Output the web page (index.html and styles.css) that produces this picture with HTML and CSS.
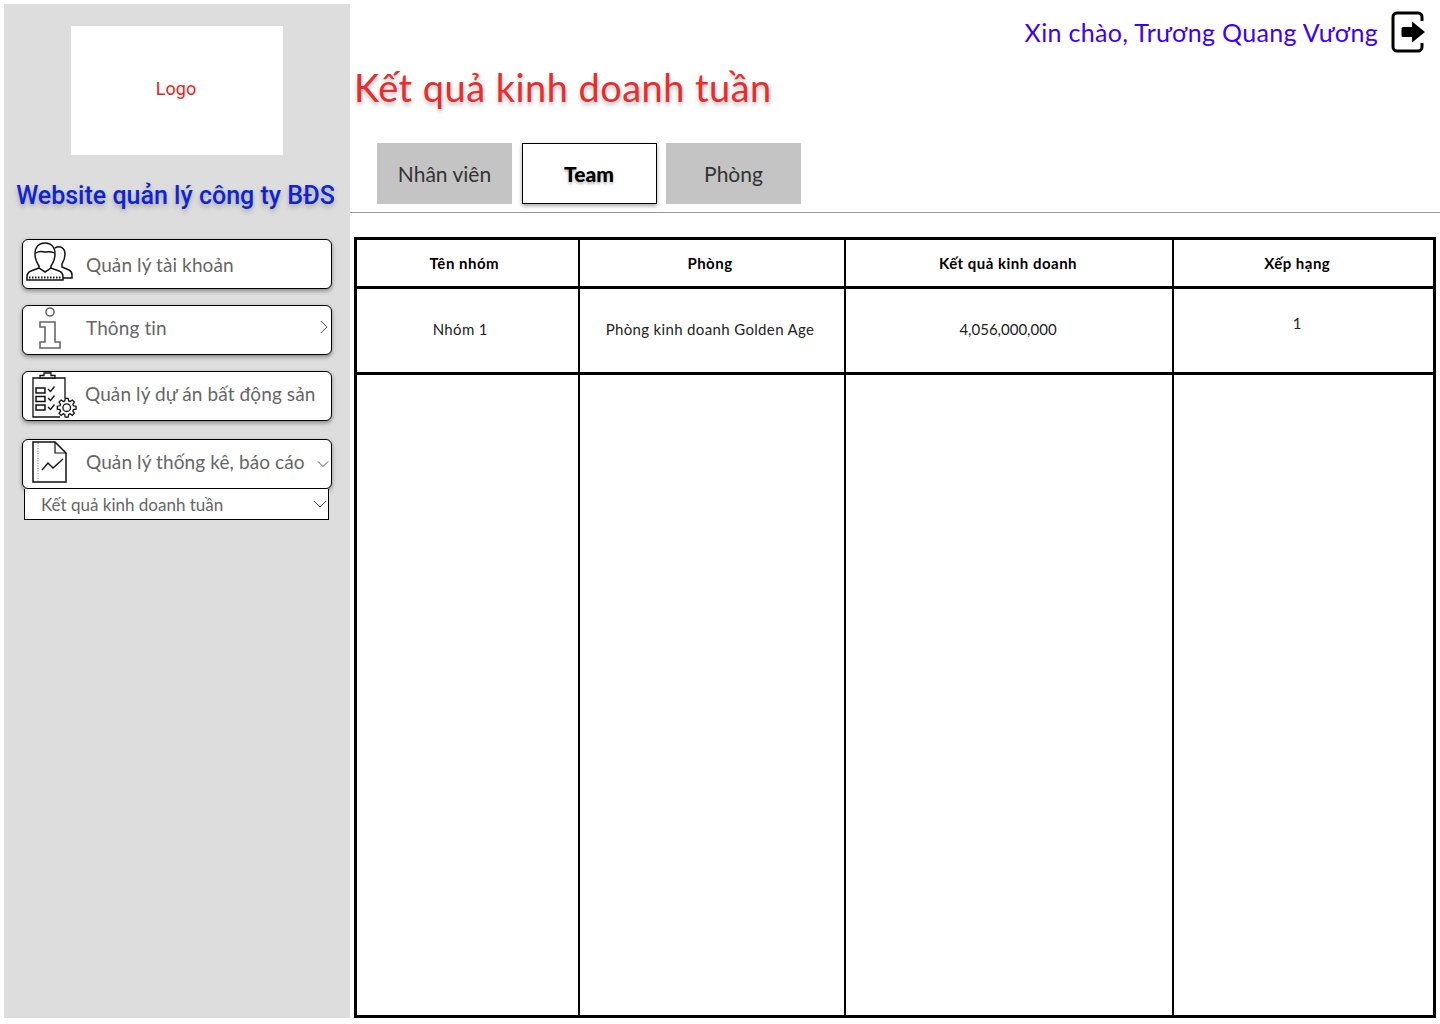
FILE: index.html
```html
<!DOCTYPE html>
<html lang="vi">

<head>
  <meta charset="UTF-8">
  <meta name="viewport" content="width=device-width, initial-scale=1.0">
  <title>Kết quả kinh doanh tuần</title>
  <link rel="stylesheet" href="styles.css">
</head>

<body>

  <aside class="sidebar">
    <div class="logo">Logo</div>
    <h2 class="brand">Website quản lý công ty BĐS</h2>

    <nav class="menu">
      <a class="menu-item">
        <svg class="menu-icon" width="50" height="48" viewBox="0 0 50 48" fill="none" stroke="#111" stroke-width="1.5">
          <path d="M30 8c5-3 10 0 10 6 0 4-1 7-3 10v3l7 3c2 1 3 3 3 5v3h-9"/>
          <path d="M10 14c0-7 4-11 10-11s10 4 10 11c0 5-2 9-4 12v3l-6 3-6-3v-3c-2-3-4-7-4-12z" fill="#fff"/>
          <path d="M11 13c4-3 7-1 9-1s6-1 9 1"/>
          <path d="M14 28l-8 3c-3 1-4 4-4 6v3h36v-3c0-2-1-5-4-6l-8-3-6 4z" fill="#fff"/>
          <path d="M4 37.5h32" stroke-dasharray="1.5 1.5" stroke-width="2"/>
        </svg>
        <span class="menu-text">Quản lý tài khoản</span>
      </a>

      <a class="menu-item">
        <svg class="menu-icon" width="50" height="48" viewBox="0 0 50 48" fill="none" stroke="#666" stroke-width="1.6">
          <circle cx="25" cy="6" r="4"/>
          <path d="M15 16h15v20h5v6H15v-6h5V21h-5z"/>
        </svg>
        <span class="menu-text menu-text-up">Thông tin</span>
        <svg class="menu-arrow menu-arrow-up" width="10" height="14" viewBox="0 0 10 14" fill="none" stroke="#555" stroke-width="1">
          <path d="M2 1l6 6-6 6"/>
        </svg>
      </a>

      <a class="menu-item">
        <svg class="menu-icon" width="50" height="48" viewBox="0 0 50 48" fill="none" stroke="#111" stroke-width="1.3">
          <path d="M35 45H8V6h32v20"/>
          <path d="M15 6V3.500h4V1h7v2.500h4V6z" fill="#fff"/>
          <path d="M11 16h9v5h-9zM11 24.500h9v5h-9zM11 33h9v5h-9z" stroke-width="1.5"/>
          <path d="M23 17l2.500 2.500 4-5M23 26l2.500 2.500 4-5M23 35l2.500 2.500 4-5"/>
          <g transform="translate(41.7 35.7)">
            <polygon fill="#fff" points="6.73,-1.93 9.38,-1.49 9.38,1.49 6.73,1.93 6.12,3.39 7.69,5.58 5.58,7.69 3.39,6.12 1.93,6.73 1.49,9.38 -1.49,9.38 -1.93,6.73 -3.39,6.12 -5.58,7.69 -7.69,5.58 -6.12,3.39 -6.73,1.93 -9.38,1.49 -9.38,-1.49 -6.73,-1.93 -6.12,-3.39 -7.69,-5.58 -5.58,-7.69 -3.39,-6.12 -1.93,-6.73 -1.49,-9.38 1.49,-9.38 1.93,-6.73 3.39,-6.12 5.58,-7.69 7.69,-5.58 6.12,-3.39"/>
            <circle r="3.8"/>
          </g>
        </svg>
        <span class="menu-text menu-text-up menu-text-tight">Quản lý dự án bất động sản</span>
      </a>

      <div class="menu-group">
        <a class="menu-item">
          <svg class="menu-icon" width="50" height="48" viewBox="0 0 50 48" fill="none" stroke="#111" stroke-width="1.5">
            <path d="M8 2h22l11 11v29H8z"/>
            <path d="M30 2v11h11" stroke-width="1.2"/>
            <path d="M13 3v38" stroke="#777" stroke-width="1" stroke-dasharray="1 1.5"/>
            <path d="M17 30l6-7 5 5 10-9" stroke-width="1.3"/>
          </svg>
          <span class="menu-text menu-text-up">Quản lý thống kê, báo cáo</span>
          <svg class="menu-arrow" width="12" height="8" viewBox="0 0 12 8" fill="none" stroke="#555" stroke-width="1">
            <path d="M1 1.5l5 5 5-5"/>
          </svg>
        </a>
        <div class="submenu">
          <span>Kết quả kinh doanh tuần</span>
          <svg width="14" height="8" viewBox="0 0 14 8" fill="none" stroke="#444" stroke-width="1">
            <path d="M1 1l6 6 6-6"/>
          </svg>
        </div>
      </div>
    </nav>
  </aside>

  <main class="content">
    <div class="topbar">
      <span class="greeting">Xin chào, Trương Quang Vương</span>
      <svg class="logout" width="36" height="44" viewBox="0 0 36 44" fill="none">
        <path d="M31 11V7a4 4 0 0 0-4-4H6a4 4 0 0 0-4 4v30a4 4 0 0 0 4 4h21a4 4 0 0 0 4-4v-4" stroke="#000" stroke-width="3"/>
        <path d="M12 17h9v-5.500L34 22 21 32.500V27h-9a1.500 1.500 0 0 1-1.500-1.500v-7A1.500 1.500 0 0 1 12 17z" fill="#000"/>
      </svg>
    </div>

    <h1 class="page-title">Kết quả kinh doanh tuần</h1>

    <div class="tabs">
      <div class="tab">Nhân viên</div>
      <div class="tab tab-active">Team</div>
      <div class="tab">Phòng</div>
    </div>

    <table class="report">
      <colgroup>
        <col class="col-team">
        <col class="col-dept">
        <col class="col-result">
        <col>
      </colgroup>
      <thead>
        <tr>
          <th class="cell-team">Tên nhóm</th>
          <th class="cell-dept">Phòng</th>
          <th class="cell-result">Kết quả kinh doanh</th>
          <th class="cell-rank">Xếp hạng</th>
        </tr>
      </thead>
      <tbody>
        <tr class="row-data">
          <td class="cell-name">Nhóm 1</td>
          <td class="cell-dept">Phòng kinh doanh Golden Age</td>
          <td class="cell-result cell-number">4,056,000,000</td>
          <td class="cell-rank rank">1</td>
        </tr>
        <tr class="row-empty">
          <td></td>
          <td></td>
          <td></td>
          <td></td>
        </tr>
      </tbody>
    </table>
  </main>

</body>

</html>
```

FILE: styles.css
```css
* {
  box-sizing: border-box;
}

body {
  font-family: Lato, "Noto Sans", sans-serif;
  margin: 0;
  padding: 4px 0 6px 4px;
  display: flex;
  height: 1024px;
  background-color: #FFFFFF;
  overflow: hidden;
}

/* Sidebar */
.sidebar {
  width: 346px;
  flex-shrink: 0;
  background-color: #DDDDDD;
  padding-top: 22px;
  display: flex;
  flex-direction: column;
  align-items: center;
}

.logo {
  width: 212px;
  height: 129px;
  background-color: #FFFFFF;
  color: #EE1C1C;
  font-family: Roboto, sans-serif;
  font-size: 18px;
  display: flex;
  align-items: center;
  justify-content: center;
  padding: 0 2px 4px 0;
}

.brand {
  font-family: Roboto, sans-serif;
  font-size: 25px;
  font-weight: 500;
  line-height: 30px;
  color: #0F23D6;
  text-shadow: 0 3px 5px rgba(0, 0, 0, 0.25);
  margin: 26px 0 28px -3px;
  white-space: nowrap;
}

.menu {
  width: 310px;
  display: flex;
  flex-direction: column;
  gap: 16px;
}

.menu-item {
  height: 50px;
  display: flex;
  align-items: center;
  background-color: #FFFFFF;
  border: 1px solid #000;
  border-radius: 6px;
  box-shadow: 0 2px 4px rgba(0, 0, 0, 0.4);
}

.menu-icon {
  flex-shrink: 0;
  margin: 0 11px 0 2px;
  overflow: visible;
}

.menu-text {
  font-size: 19px;
  letter-spacing: 0.1px;
  color: #666;
  white-space: nowrap;
}

.menu-text-up {
  margin-bottom: 6px;
}

.menu-text-tight {
  margin-left: -1px;
}

.menu-arrow {
  margin-left: auto;
  margin-right: 2px;
}

.menu-arrow-up {
  margin-bottom: 6px;
}

.menu-group {
  margin-top: 2px;
}

.submenu {
  width: 305px;
  height: 31px;
  margin-left: 2px;
  background-color: #FFFFFF;
  border: 1px solid #000;
  border-top-width: 0;
  display: flex;
  align-items: center;
  justify-content: space-between;
  padding: 0 1px 0 16px;
  font-size: 17px;
  color: #666;
}

/* Main area */
.content {
  flex: 1;
  min-width: 0;
  display: flex;
  flex-direction: column;
}

.topbar {
  height: 50px;
  display: flex;
  align-items: center;
  justify-content: flex-end;
  padding: 5px 13px 0 0;
}

.greeting {
  font-size: 25px;
  letter-spacing: 0.33px;
  color: #3A00FF;
  margin-right: 13px;
}

.page-title {
  font-size: 38px;
  font-weight: 400;
  letter-spacing: 0.45px;
  line-height: 44px;
  color: #EE2A2A;
  text-shadow: 0 3px 4px rgba(0, 0, 0, 0.25);
  margin: 11px 0 0 4px;
}

.tabs {
  display: flex;
  gap: 9.5px;
  padding: 0 0 8px 27px;
  margin-top: 34px;
  border-bottom: 1px solid #999;
}

.tab {
  width: 135px;
  height: 61px;
  background-color: #C4C4C4;
  font-size: 21px;
  color: #333;
  display: flex;
  align-items: center;
  justify-content: center;
}

.tab-active {
  background-color: #FFFFFF;
  border: 1px solid #000;
  box-shadow: 0 2px 4px rgba(0, 0, 0, 0.35);
  color: #000;
  font-weight: 900;
  text-shadow: 0 2px 3px rgba(0, 0, 0, 0.3);
}

/* Report table */
.report {
  width: 1082px;
  flex: 1;
  margin: 24px 0 0 4px;
  border-collapse: collapse;
  table-layout: fixed;
  border: 3px solid #000;
  font-size: 15px;
  letter-spacing: 0.35px;
  color: #222;
}

.col-team {
  width: 223px;
}

.col-dept {
  width: 266px;
}

.col-result {
  width: 328px;
}

.report th,
.report td {
  border: 2px solid #000;
  text-align: center;
  padding: 0;
}

.report th {
  height: 49px;
  color: #000;
  font-weight: 700;
  letter-spacing: 0.5px;
  border-bottom-width: 3px;
  padding-bottom: 0;
}

.report .cell-team {
  padding-right: 6px;
}

.report .cell-name {
  padding-right: 14px;
}

.report .cell-dept {
  padding-right: 3px;
}

.report .cell-result {
  padding-right: 1px;
}

.report .cell-rank {
  padding-right: 12px;
}

.report .cell-number {
  letter-spacing: 0;
}

.row-data td {
  height: 86px;
  padding-bottom: 4px;
  border-bottom-width: 3px;
}

.report .rank {
  padding-bottom: 16px;
}
```
